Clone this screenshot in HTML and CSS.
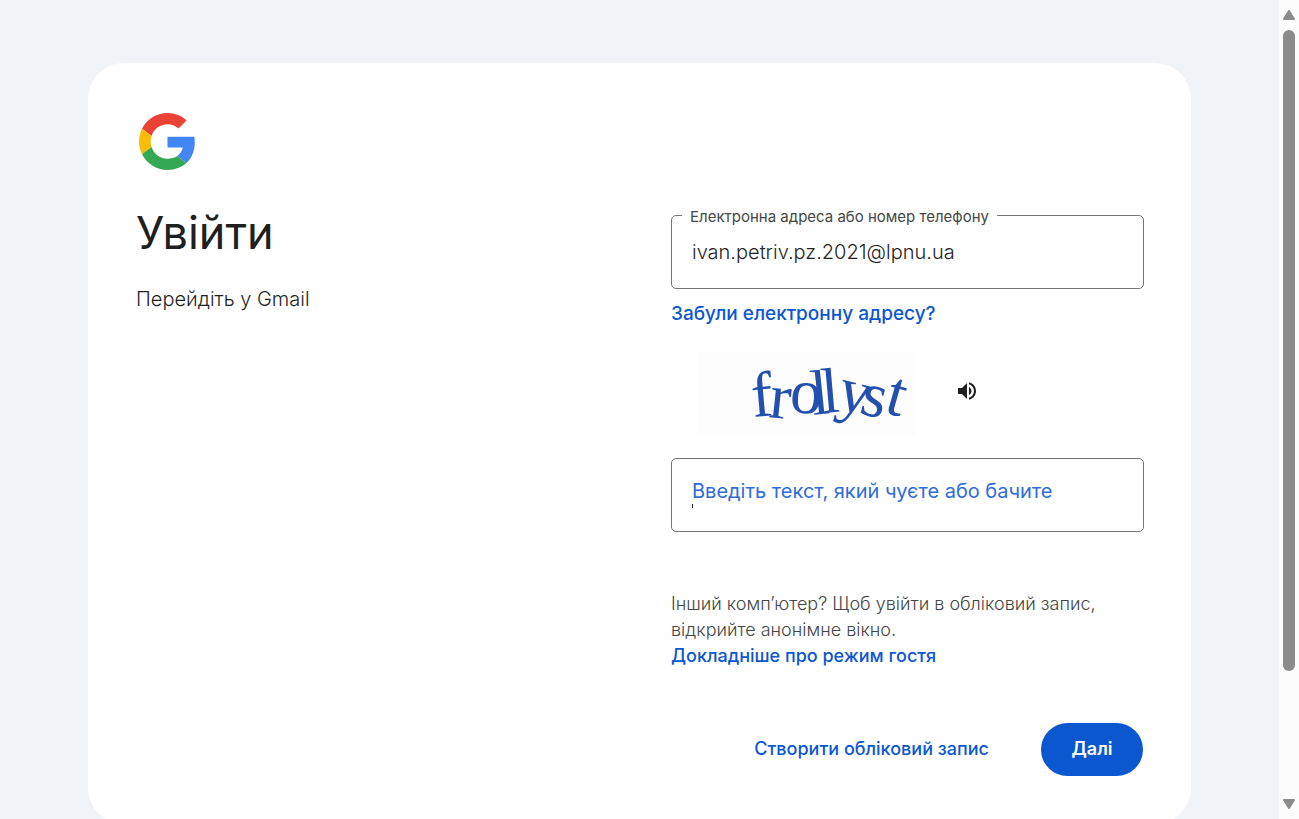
FILE: index.html
```html
<!DOCTYPE html>
<html lang="uk">
<head>
<meta charset="utf-8">
<title>Увійти</title>
<link rel="stylesheet" href="styles.css">
</head>
<body>
<div class="window">
  <main class="page">
    <div class="card">
      <svg class="logo" viewBox="0 0 48 48" role="img" aria-label="Google">
        <path fill="#EA4335" d="M24 9.5c3.54 0 6.71 1.22 9.21 3.6l6.85-6.85C35.9 2.38 30.47 0 24 0 14.62 0 6.51 5.38 2.56 13.22l7.98 6.19C12.43 13.72 17.74 9.5 24 9.5z"/>
        <path fill="#4285F4" d="M46.98 24.55c0-1.57-.15-3.09-.38-4.55H24v9.02h12.94c-.58 2.96-2.26 5.48-4.78 7.18l7.73 6c4.51-4.18 7.09-10.36 7.09-17.65z"/>
        <path fill="#FBBC05" d="M10.53 28.59c-.48-1.45-.76-2.99-.76-4.59s.27-3.14.76-4.59l-7.98-6.19C.92 16.46 0 20.12 0 24c0 3.88.92 7.54 2.56 10.78l7.97-6.19z"/>
        <path fill="#34A853" d="M24 48c6.48 0 11.93-2.13 15.89-5.81l-7.73-6c-2.15 1.45-4.92 2.3-8.16 2.3-6.26 0-11.57-4.22-13.47-9.91l-7.98 6.19C6.51 42.62 14.62 48 24 48z"/>
      </svg>
      <div class="columns">
        <header class="intro">
          <h1 class="title">Увійти</h1>
          <p class="subtitle">Перейдіть у Gmail</p>
        </header>
        <form class="form">
          <div class="field">
            <label class="field-label" for="email">Електронна адреса або номер телефону</label>
            <input class="field-input" id="email" type="text" value="ivan.petriv.pz.2021@lpnu.ua">
          </div>
          <a class="link forgot" href="#">Забули електронну адресу?</a>
          <div class="challenge">
            <svg class="challenge-word" viewBox="0 0 218 84" role="img" aria-label="frollyst">
              <text class="challenge-text" x="55 70 91 115 125 137 160 185" y="66 66 61 64 62 57 62 61" rotate="-5 6 4 -6 -5 14 14 16">frollyst</text>
            </svg>
            <button class="sound" type="button" aria-label="Прослухати">
              <svg class="sound-icon" viewBox="0 0 24 24"><path fill="currentColor" d="M3 9v6h4l5 5V4L7 9H3zm13.500 3c0-1.770-1.020-3.290-2.500-4.030v8.050c1.480-.73 2.500-2.250 2.500-4.020zM14 3.230v2.060c2.890.86 5 3.540 5 6.710s-2.110 5.850-5 6.710v2.060c4.010-.91 7-4.490 7-8.770s-2.990-7.860-7-8.770z"/></svg>
            </button>
          </div>
          <div class="field">
            <input class="field-input answer" id="answer" type="text" aria-label="Введіть текст, який чуєте або бачите" placeholder="Введіть текст, який чуєте або бачите">
            <span class="caret"></span>
          </div>
          <p class="note">Інший комп’ютер? Щоб увійти в обліковий запис, відкрийте анонімне вікно.<br><a class="link" href="#">Докладніше про режим гостя</a></p>
          <div class="actions">
            <button class="create" type="button">Створити обліковий запис</button>
            <button class="next" type="button">Далі</button>
          </div>
        </form>
      </div>
    </div>
  </main>
  <div class="scrollbar" aria-hidden="true">
    <svg class="arrow" viewBox="0 0 12 10"><path d="M6 1 11 9H1z"/></svg>
    <div class="track"><div class="thumb"></div></div>
    <svg class="arrow" viewBox="0 0 12 10"><path d="M6 9 1 1h10z"/></svg>
  </div>
</div>
</body>
</html>
```

FILE: styles.css
```css
* {
  box-sizing: border-box;
}

body {
  margin: 0;
  font-family: Inter, "Noto Sans", sans-serif;
  color: #1f1f1f;
  background: #f0f3f8;
}

.window {
  display: flex;
  height: 100vh;
  overflow: hidden;
}

.page {
  flex: 1;
  padding: 63px 88px;
  overflow: hidden;
}

.card {
  padding: 50px 47px 48px 48px;
  border-radius: 36px;
  background: #fff;
}

.logo {
  display: block;
  width: 57px;
  height: 57px;
  margin-left: 3px;
}

.columns {
  display: grid;
  grid-template-columns: 1fr 1fr;
  gap: 62px;
}

.intro {
  padding-top: 33px;
}

.title {
  margin: 0;
  font-size: 45px;
  line-height: 60px;
  font-weight: 400;
}

.subtitle {
  margin: 21px 0 0;
  font-size: 20px;
  line-height: 30px;
  font-weight: 300;
}

.form {
  padding-top: 45px;
}

.field {
  position: relative;
}

.field-label {
  position: absolute;
  top: -8px;
  left: 11px;
  padding: 0 8px;
  background: #fff;
  color: #444746;
  font-size: 15px;
  line-height: 20px;
  font-weight: 400;
  white-space: nowrap;
}

.field-input {
  display: block;
  width: 100%;
  height: 74px;
  padding: 0 20px;
  border: 1px solid #747775;
  border-radius: 5px;
  background: #fff;
  color: #1f1f1f;
  font: inherit;
  font-size: 20px;
  font-weight: 300;
}

.answer {
  padding-bottom: 8px;
}

.answer::placeholder {
  color: #2f6cd9;
  font-weight: 400;
  opacity: 1;
}

.caret {
  position: absolute;
  left: 21px;
  top: 46px;
  width: 1px;
  height: 4px;
  background: #1f1f1f;
}

.link {
  color: #0b57d0;
  font-size: 18px;
  line-height: 26px;
  font-weight: 500;
  text-decoration: none;
}

.forgot {
  display: block;
  margin-top: 12px;
  font-size: 19px;
}

.challenge {
  display: flex;
  align-items: flex-start;
  gap: 39px;
  margin: 24px 0 23px;
  padding-left: 27px;
}

.challenge-word {
  width: 218px;
  height: 84px;
  overflow: visible;
  background: #fdfdfe;
}

.challenge-text {
  fill: #2350ae;
  font-family: "Liberation Serif", serif;
  font-size: 64px;
}

.sound {
  display: block;
  margin-top: 28px;
  padding: 0;
  border: 0;
  background: none;
  color: #1f1f1f;
}

.sound-icon {
  display: block;
  width: 24px;
  height: 24px;
}

.note {
  margin: 59px 0 0;
  color: #444746;
  font-size: 18px;
  line-height: 26px;
  font-weight: 300;
}

.actions {
  display: flex;
  justify-content: flex-end;
  align-items: center;
  gap: 52px;
  margin-top: 54px;
  padding-right: 1px;
}

.create,
.next {
  border: 0;
  font: inherit;
  font-size: 18px;
  font-weight: 500;
}

.create {
  padding: 0 0 2px;
  background: none;
  color: #0b57d0;
}

.next {
  width: 102px;
  height: 53px;
  padding-bottom: 3px;
  border-radius: 27px;
  background: #0b57d0;
  color: #fff;
  font-weight: 600;
}

.scrollbar {
  display: flex;
  flex-direction: column;
  align-items: center;
  width: 20px;
  padding: 10px 0;
  background: #fcfcfc;
}

.arrow {
  width: 12px;
  height: 10px;
  fill: #8b8b8b;
  stroke: #8b8b8b;
  stroke-width: 2px;
  stroke-linejoin: round;
}

.track {
  flex: 1;
  margin: 10px 0;
}

.thumb {
  width: 12px;
  height: 84.5%;
  border-radius: 6px;
  background: #8b8b8b;
}
```
